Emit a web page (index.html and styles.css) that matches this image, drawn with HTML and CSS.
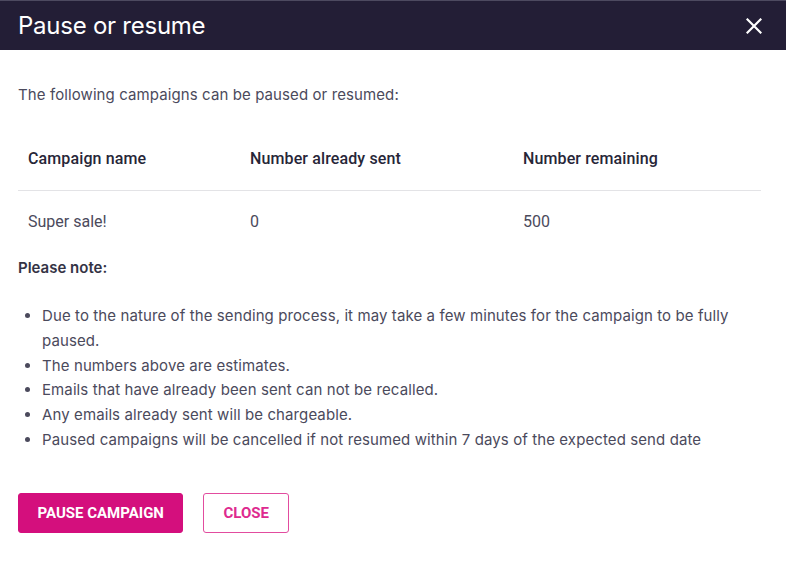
FILE: index.html
```html
<!DOCTYPE html>
<html lang="en">
<head>
<meta charset="utf-8">
<title>Pause or resume</title>
<link rel="stylesheet" href="styles.css">
</head>
<body>
<div class="dialog">
  <header class="dialog-header">
    <h1 class="dialog-title">Pause or resume</h1>
    <button class="close-x" aria-label="Close">
      <svg width="16" height="16" viewBox="0 0 16 16"><path d="M1.5 1.5 L14.5 14.5 M14.5 1.5 L1.5 14.5" stroke="#fff" stroke-width="2.2" stroke-linecap="square" fill="none"/></svg>
    </button>
  </header>
  <div class="dialog-body">
    <p class="intro">The following campaigns can be paused or resumed:</p>
    <table class="campaigns">
      <thead>
        <tr><th class="c1">Campaign name</th><th class="c2">Number already sent</th><th class="c3">Number remaining</th></tr>
      </thead>
      <tbody>
        <tr><td>Super sale!</td><td>0</td><td>500</td></tr>
      </tbody>
    </table>
    <p class="note-title">Please note:</p>
    <ul class="notes">
      <li>Due to the nature of the sending process, it may take a few minutes for the campaign to be fully paused.</li>
      <li>The numbers above are estimates.</li>
      <li>Emails that have already been sent can not be recalled.</li>
      <li>Any emails already sent will be chargeable.</li>
      <li>Paused campaigns will be cancelled if not resumed within 7 days of the expected send date</li>
    </ul>
    <div class="actions">
      <button class="btn btn-primary">PAUSE CAMPAIGN</button>
      <button class="btn btn-outline">CLOSE</button>
    </div>
  </div>
</div>
</body>
</html>
```

FILE: styles.css
```css
html, body {
  margin: 0;
  padding: 0;
  background: #ffffff;
}
body {
  font-family: "Inter", "Roboto", sans-serif;
  color: #4b4a5c;
}
.dialog {
  width: 786px;
  height: 564px;
  box-sizing: border-box;
}
.dialog-header {
  height: 50px;
  box-sizing: border-box;
  background: #231e36;
  border-top: 1px solid #4d4a60;
  display: flex;
  align-items: center;
  justify-content: space-between;
  padding: 0 24px 0 18px;
}
.dialog-title {
  margin: 0;
  font-family: "Inter", sans-serif;
  font-weight: 400;
  font-size: 24px;
  color: #ffffff;
  letter-spacing: -0.25px;
}
.close-x {
  background: none;
  border: 0;
  padding: 0;
  width: 16px;
  height: 16px;
  display: flex;
  cursor: pointer;
}
.dialog-body {
  padding: 33px 25px 0 18px;
}
.intro {
  margin: 0;
  font-size: 15px;
  line-height: 24px;
  letter-spacing: 0.1px;
}
.campaigns {
  width: 100%;
  border-collapse: collapse;
  margin-top: 19px;
  font-family: "Roboto", sans-serif;
  font-size: 16px;
}
.campaigns th {
  text-align: left;
  font-weight: 500;
  color: #272638;
  padding: 21px 10px 19px;
  line-height: 24px;
  letter-spacing: 0.12px;
  border-bottom: 1px solid #e3e3e6;
}
.campaigns th.c1 { width: 202px; }
.campaigns th.c2 { width: 253px; }
.campaigns td {
  padding: 19px 10px 17px;
  line-height: 24px;
  color: #4b4a5c;
}
.note-title {
  margin: 5px 0 0;
  font-size: 15px;
  line-height: 24px;
  font-weight: 600;
  color: #343345;
}
.notes {
  margin: 24px 0 0;
  padding-left: 24px;
  font-size: 15px;
  line-height: 24.8px;
  letter-spacing: 0.1px;
}
.actions {
  display: flex;
  gap: 20px;
  margin-top: 40px;
}
.btn {
  height: 40px;
  box-sizing: border-box;
  font-family: "Roboto", sans-serif;
  font-size: 15px;
  font-weight: 700;
  border-radius: 3px;
  padding: 0 18.5px;
  cursor: pointer;
}
.btn-primary {
  background: #d40f7d;
  color: #ffffff;
  border: 1px solid #d40f7d;
}
.btn-outline {
  background: #ffffff;
  color: #de2a8f;
  border: 1px solid #e24c9f;
  padding: 0 19px;
}
```
